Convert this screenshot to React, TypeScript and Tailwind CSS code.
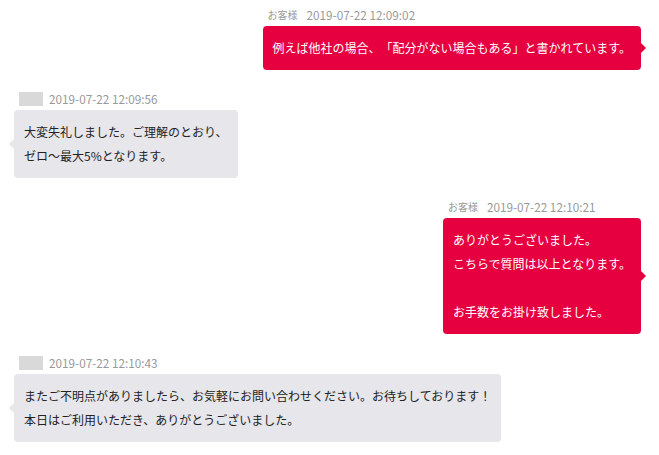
import React from "react";

type Msg = { side: "left" | "right"; time: string; text: string };

const msgs: Msg[] = [
  { side: "right", time: "2019-07-22 12:09:02", text: "例えば他社の場合、「配分がない場合もある」と書かれています。" },
  { side: "left", time: "2019-07-22 12:09:56", text: "大変失礼しました。ご理解のとおり、\nゼロ～最大5%となります。" },
  { side: "right", time: "2019-07-22 12:10:21", text: "ありがとうございました。\nこちらで質問は以上となります。\n\nお手数をお掛け致しました。" },
  { side: "left", time: "2019-07-22 12:10:43", text: "またご不明点がありましたら、お気軽にお問い合わせください。お待ちしております！\n本日はご利用いただき、ありがとうございました。" },
];

function Message({ m }: { m: Msg }) {
  const right = m.side === "right";
  return (
    <div className={`flex ${right ? "justify-end" : "justify-start"}`}>
      <div className="flex flex-col items-start">
        <div className="flex h-[14px] items-center overflow-visible pl-[5px] mb-[4px] text-[11.75px] leading-[14px] text-[#999999]">
          {right ? (
            <span className="mr-[9px] text-[10px] leading-[14px]">お客様</span>
          ) : (
            <span className="mr-[6px] inline-block h-[14px] w-[24px] bg-[#d9d9d9]" />
          )}
          <span className="leading-[14px]">{m.time}</span>
        </div>
        <div
          className={`relative rounded-[4px] px-[10px] py-[10px] text-[12px] leading-[24px] whitespace-pre-line [text-spacing-trim:space-all] ${
            right ? "bg-[#e6003f] text-white" : "bg-[#e6e6eb] text-[#222222]"
          }`}
        >
          {m.text}
          {right ? (
            <span className="absolute right-[-5px] top-1/2 -translate-y-1/2 h-0 w-0 border-y-[5px] border-l-[5px] border-y-transparent border-l-[#e6003f]" />
          ) : (
            <span className="absolute left-[-5px] top-1/2 -translate-y-1/2 h-0 w-0 border-y-[5px] border-r-[5px] border-y-transparent border-r-[#e6e6eb]" />
          )}
        </div>
      </div>
    </div>
  );
}

export default function App() {
  return (
    <div
      className="min-h-[455px] w-[659px] bg-white pt-[8px] pl-[14px] pr-[18px] flex flex-col gap-[22px]"
      style={{ fontFamily: '"Noto Sans CJK JP", "Noto Sans", sans-serif' }}
    >
      {msgs.map((m, i) => (
        <Message key={i} m={m} />
      ))}
    </div>
  );
}
